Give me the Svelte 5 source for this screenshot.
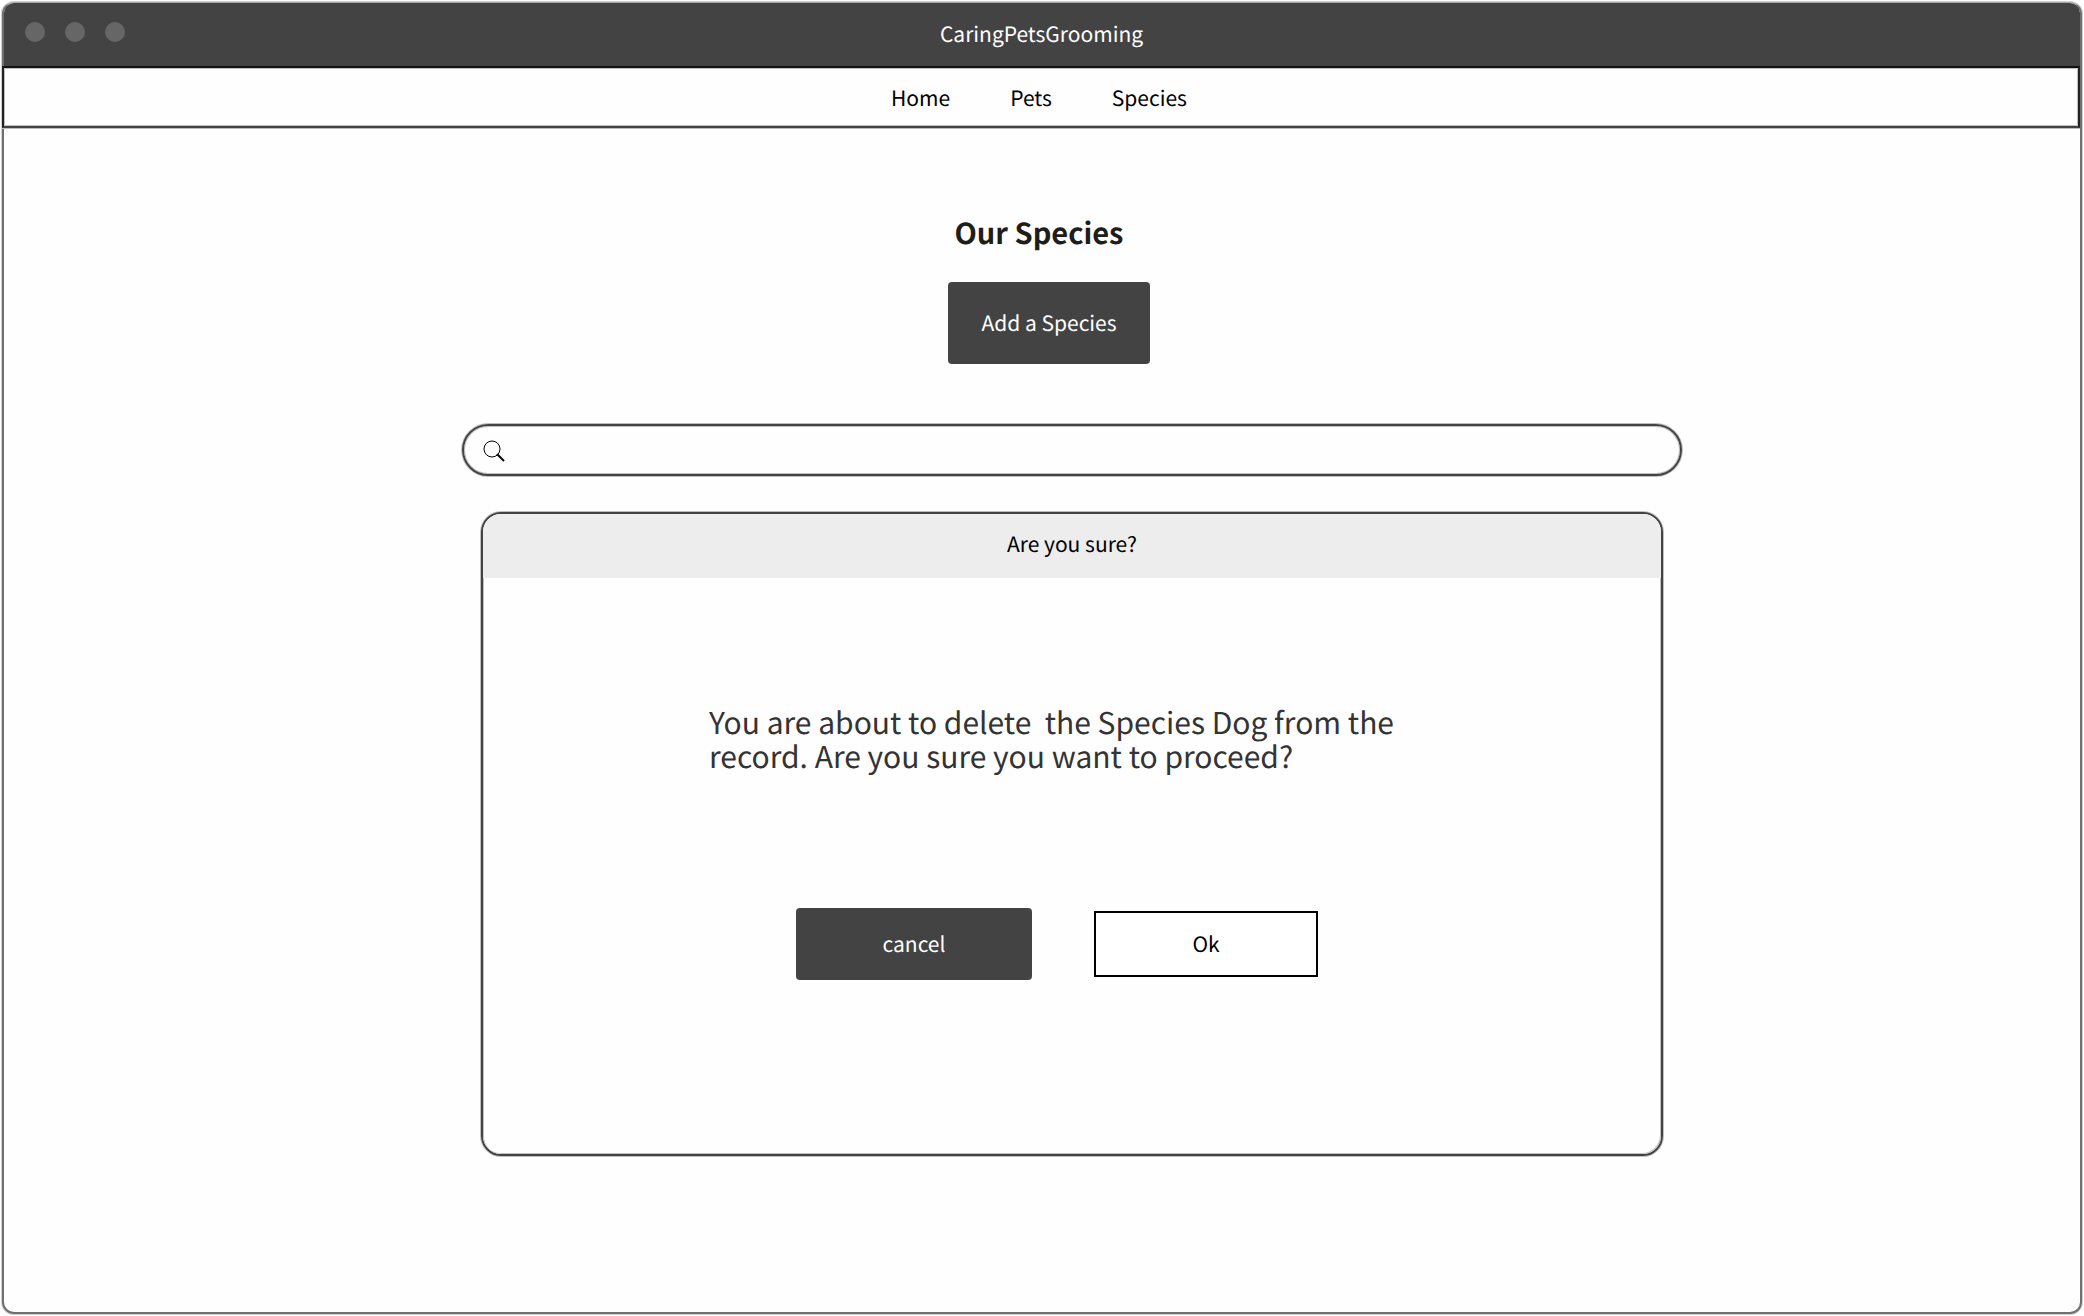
<script>
  const links = ['Home', 'Pets', 'Species'];
  const message = 'You are about to delete  the Species Dog from the record. Are you sure you want to proceed?';
  let query = $state('');
</script>

<div class="window">
  <header class="titlebar">
    <div class="dots" aria-hidden="true"><i></i><i></i><i></i></div>
    <span class="title">CaringPetsGrooming</span>
  </header>

  <nav class="nav">
    {#each links as link}
      <a href="#{link.toLowerCase()}">{link}</a>
    {/each}
  </nav>

  <main class="page">
    <h1>Our Species</h1>
    <button class="solid add" type="button">Add a Species</button>

    <div class="content">
      <label class="search">
        <svg viewBox="0 0 22 22" aria-hidden="true">
          <circle cx="9" cy="9" r="8" fill="none" stroke="#000" stroke-width="1" />
          <path d="M14.5 14.5 L21 21" stroke="#000" stroke-width="2" />
          <path d="M13.5 15 L15 13.5" stroke="#000" stroke-width="1" />
        </svg>
        <input type="search" aria-label="Search species" bind:value={query} />
      </label>

      <section class="dialog" role="dialog" aria-labelledby="dialog-title">
        <h2 id="dialog-title">Are you sure?</h2>
        <div class="body">
          <p>{message}</p>
          <div class="actions">
            <button class="solid cancel" type="button">cancel</button>
            <button class="outline" type="button">Ok</button>
          </div>
        </div>
      </section>
    </div>
  </main>
</div>

<style>
  :global(body) {
    background: #fff;
  }

  .window,
  .window * {
    box-sizing: border-box;
  }

  .window {
    display: flex;
    flex-direction: column;
    min-height: calc(100vh - 4px);
    margin: 2px;
    border: 2px solid #707070;
    border-top: 1px solid #a8a8a8;
    border-radius: 12px;
    box-shadow: 0 0 0 1px #d0d0d0;
    background: #fefefe;
    color: #000;
    font-family: 'Noto Sans CJK SC', 'Noto Sans', sans-serif;
    font-size: 21px;
    line-height: 32px;
    text-rendering: geometricPrecision;
  }

  .titlebar {
    display: grid;
    grid-template-columns: 1fr auto 1fr;
    align-items: center;
    height: 63px;
    padding: 0 22px 2px 21px;
    border-radius: 10px 10px 0 0;
    background: #434343;
    color: #fff;
  }

  .dots {
    display: flex;
    gap: 20px;
    padding-bottom: 4px;
  }

  .dots i {
    width: 20px;
    height: 20px;
    border-radius: 50%;
    background: #666;
  }

  .nav {
    display: flex;
    align-items: center;
    justify-content: center;
    gap: 60px;
    height: 62px;
    margin-left: -2px;
    padding: 2px 4px 0 0;
    border: 2px solid #222;
    border-top-color: #111;
    border-bottom-color: #434343;
    box-shadow: 0 1px 0 #c0c0c0, inset 0 0 0 1px #c0c0c0;
  }

  .nav a {
    color: inherit;
    text-decoration: none;
  }

  .page {
    display: flex;
    flex-direction: column;
    align-items: center;
    padding: 83px 6px 40px 0;
  }

  h1 {
    margin: 0 0 29px;
    color: #1f1d1a;
    font-size: 29px;
    font-weight: 700;
    line-height: 42px;
  }

  button {
    padding: 0;
    font: inherit;
    text-rendering: inherit;
    cursor: pointer;
  }

  .solid {
    border: 0;
    border-radius: 4px;
    background: #434343;
    color: #fff;
  }

  .add {
    min-width: 202px;
    height: 82px;
    margin: 0 0 60px 20px;
  }

  .content {
    display: flex;
    flex-direction: column;
    align-items: center;
    gap: 36px;
    width: 100%;
    padding-left: 66px;
  }

  .search {
    display: flex;
    align-items: center;
    gap: 12px;
    width: round(60.9%, 2px);
    height: 52px;
    padding: 2px 24px 0 19px;
    border: 2px solid #434343;
    border-radius: 26px;
    box-shadow: 0 0 0 1px #c0c0c0, inset 0 0 0 1px #c0c0c0;
  }

  .search svg {
    flex: none;
    width: 22px;
    height: 22px;
  }

  .search input {
    flex: 1;
    min-width: 0;
    border: 0;
    outline: 0;
    background: none;
    font: inherit;
  }

  .dialog {
    width: round(59%, 2px);
    border: 2px solid #434343;
    border-radius: 20px;
    box-shadow: 0 0 0 1px #c0c0c0;
    overflow: hidden;
  }

  h2 {
    margin: 0;
    padding: 14px 0 18px;
    background: #ededed;
    font-size: 21px;
    font-weight: 400;
    line-height: 32px;
    text-align: center;
  }

  .body {
    display: flex;
    flex-direction: column;
    align-items: center;
    padding: 126px 30px 174px 0;
    box-shadow: inset 1px 0 #c0c0c0, inset -1px -1px #c0c0c0;
    border-radius: 0 0 18px 18px;
  }

  p {
    max-width: 696px;
    margin: 0 0 136px;
    color: #333;
    font-size: 30px;
    line-height: 34px;
    white-space: pre-wrap;
  }

  .actions {
    display: flex;
    align-items: center;
    gap: 62px;
  }

  .cancel {
    width: 236px;
    height: 72px;
  }

  .outline {
    width: 224px;
    height: 66px;
    border: 2px solid #000;
    border-radius: 0;
    background: #fff;
    color: #000;
  }
</style>
